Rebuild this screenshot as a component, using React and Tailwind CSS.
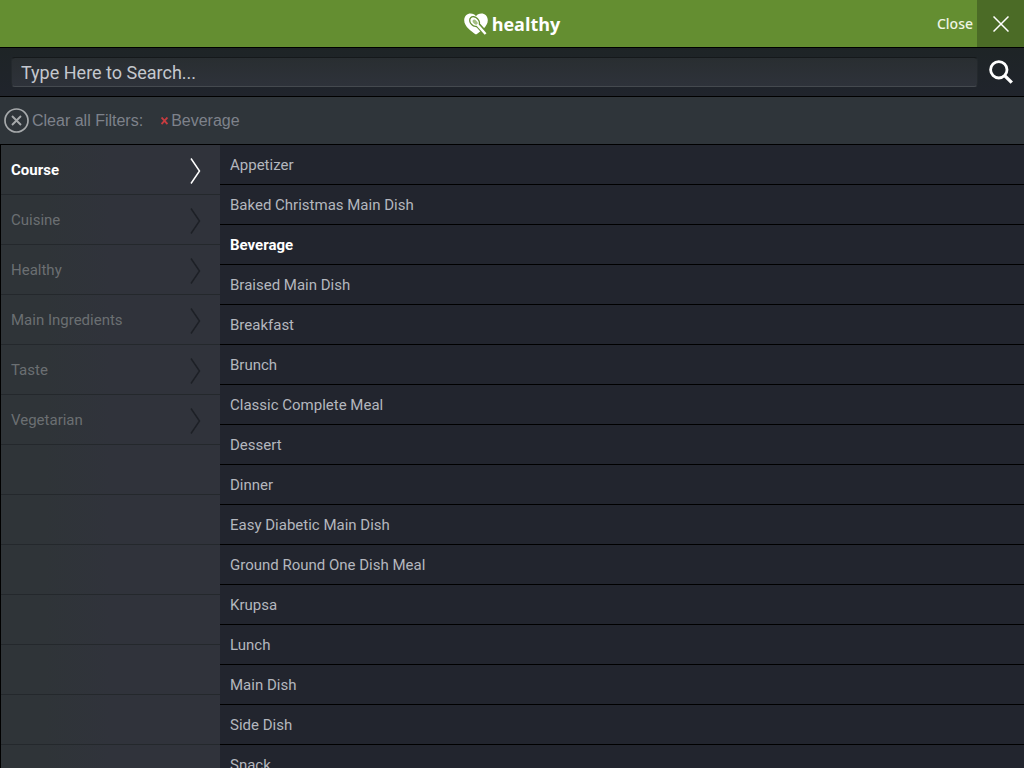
const filters = ["Course", "Cuisine", "Healthy", "Main Ingredients", "Taste", "Vegetarian"];

const courses = [
  "Appetizer",
  "Baked Christmas Main Dish",
  "Beverage",
  "Braised Main Dish",
  "Breakfast",
  "Brunch",
  "Classic Complete Meal",
  "Dessert",
  "Dinner",
  "Easy Diabetic Main Dish",
  "Ground Round One Dish Meal",
  "Krupsa",
  "Lunch",
  "Main Dish",
  "Side Dish",
  "Snack",
];

const emptyRows = Array.from({ length: 12 }, (_, i) => i);

function Logo() {
  return (
    <div className="flex items-center gap-1 text-white">
      <svg width="24" height="22" viewBox="0 0 24 22" aria-hidden="true">
        <path
          d="M12 21.6 C8 18.6 0.2 13.8 0.2 7.2 C0.2 3.2 3.2 0.5 6.6 0.5 C9 0.5 10.9 1.6 12 3.2 C13.1 1.6 15 0.5 17.4 0.5 C20.8 0.5 23.8 3.2 23.8 7.2 C23.8 13.8 16 18.6 12 21.6 Z"
          fill="currentColor"
        />
        <path d="M13 11 L21.5 20.5" stroke="#648e31" strokeWidth="5" />
        <ellipse cx="10.6" cy="8.6" rx="6.2" ry="4.8" transform="rotate(45 10.6 8.6)" fill="#648e31" />
        <ellipse cx="10.6" cy="8.6" rx="4.9" ry="3.5" transform="rotate(45 10.6 8.6)" fill="currentColor" />
        <ellipse cx="11.2" cy="9.2" rx="3.1" ry="1.8" transform="rotate(45 11.2 9.2)" fill="#a3be82" />
        <path d="M13 11.4 L21.6 21" stroke="currentColor" strokeWidth="2.4" />
      </svg>
      <span className="font-['Open_Sans',sans-serif] text-lg font-bold leading-6">healthy</span>
    </div>
  );
}

function Chevron() {
  return (
    <svg width="12" height="28" viewBox="0 0 12 28" fill="none" stroke="currentColor" strokeWidth="1.5" aria-hidden="true">
      <path d="M1 1.5 L9.5 14 L1 26.5" />
    </svg>
  );
}

export default function App() {
  return (
    <div className="flex h-screen flex-col overflow-hidden bg-[#22252e] font-[Roboto,sans-serif] text-[15px]">
      <header className="grid h-12 shrink-0 grid-cols-[1fr_auto_1fr] border-b border-black bg-[#648e31]">
        <div />
        <Logo />
        <button type="button" className="flex items-stretch justify-self-end text-white">
          <span className="flex items-center pr-1 font-['Noto_Sans',sans-serif] text-sm font-medium text-[#eef5e4]">Close</span>
          <span className="flex w-[47px] items-center justify-center bg-[#4b6b26]">
            <svg width="16" height="16" viewBox="0 0 16 16" stroke="currentColor" strokeWidth="1.5" aria-hidden="true">
              <path d="M0.5 0.5 L15.5 15.5 M15.5 0.5 L0.5 15.5" />
            </svg>
          </span>
        </button>
      </header>

      <form
        className="flex h-[49px] shrink-0 items-center border-b border-black bg-linear-to-b from-[#1e2426] to-[#20242c] pl-[11px]"
        onSubmit={(e) => e.preventDefault()}
      >
        <input
          type="text"
          aria-label="Search recipes"
          placeholder="Type Here to Search..."
          className="h-[30px] min-w-0 flex-1 rounded-sm border border-t-[#15191b] border-x-[#24292d] border-b-[#454a4f] bg-linear-to-b from-[#292e31] to-[#2e323a] px-[9px] text-lg text-[#c4c8ce] outline-none placeholder:text-[#c4c8ce]"
        />
        <button type="submit" aria-label="Search" className="flex w-[46px] items-center justify-center text-white">
          <svg width="24" height="24" viewBox="0 0 24 24" fill="none" stroke="currentColor" aria-hidden="true">
            <circle cx="9.8" cy="9.8" r="8.2" strokeWidth="2.8" />
            <path d="M15.4 15.4 L22.8 22.6" strokeWidth="3.4" />
          </svg>
        </button>
      </form>

      <div className="flex h-12 shrink-0 items-center border-b border-black bg-[#2f353a] pl-1 font-['Liberation_Sans',sans-serif] text-base text-[#7e828b]">
        <button type="button" className="flex items-center gap-[3px]">
          <svg width="25" height="26" viewBox="0 0 25 26" fill="none" stroke="#a6a9ab" aria-hidden="true">
            <circle cx="12.5" cy="12.5" r="11.5" strokeWidth="1.7" />
            <path d="M8 8 L17 17 M17 8 L8 17" strokeWidth="1.9" />
          </svg>
          Clear all Filters:
        </button>
        <button type="button" className="ml-[18px] flex items-center gap-[3px]">
          <svg width="7" height="8" viewBox="0 0 7 8" stroke="#c63c40" strokeWidth="1.9" aria-hidden="true">
            <path d="M0.5 0.5 L6.5 7 M6.5 0.5 L0.5 7" />
          </svg>
          Beverage
        </button>
      </div>

      <div className="flex min-h-0 flex-1">
        <nav
          aria-label="Filters"
          className="w-[220px] shrink-0 overflow-hidden border-l border-black bg-linear-to-r from-[#2f3438] from-20% to-[#30333b] to-50%"
        >
          <ul>
            {filters.map((name, i) => (
              <li key={name} className="h-[50px] border-b border-[#24282c]">
                <button
                  type="button"
                  className={
                    i === 0
                      ? "flex h-full w-full items-center justify-between pt-0.5 pr-[18px] pl-2.5 font-bold text-white"
                      : "flex h-full w-full items-center justify-between pt-0.5 pr-[18px] pl-2.5 text-[#6b6f72]"
                  }
                >
                  {name}
                  <span className={i === 0 ? "text-white" : "text-[#1d2026]"}>
                    <Chevron />
                  </span>
                </button>
              </li>
            ))}
            {emptyRows.map((row) => (
              <li key={row} aria-hidden="true" className="h-[50px] border-b border-[#24282c]" />
            ))}
          </ul>
        </nav>
        <ul className="min-w-0 flex-1 overflow-hidden">
          {courses.map((name) => (
            <li key={name} className="h-10 border-b border-black">
              <button
                type="button"
                className={
                  name === "Beverage"
                    ? "h-full w-full px-2.5 pt-0.5 text-left font-bold text-white"
                    : "h-full w-full px-2.5 pt-0.5 text-left text-[#b4b7be]"
                }
              >
                {name}
              </button>
            </li>
          ))}
        </ul>
      </div>
    </div>
  );
}
